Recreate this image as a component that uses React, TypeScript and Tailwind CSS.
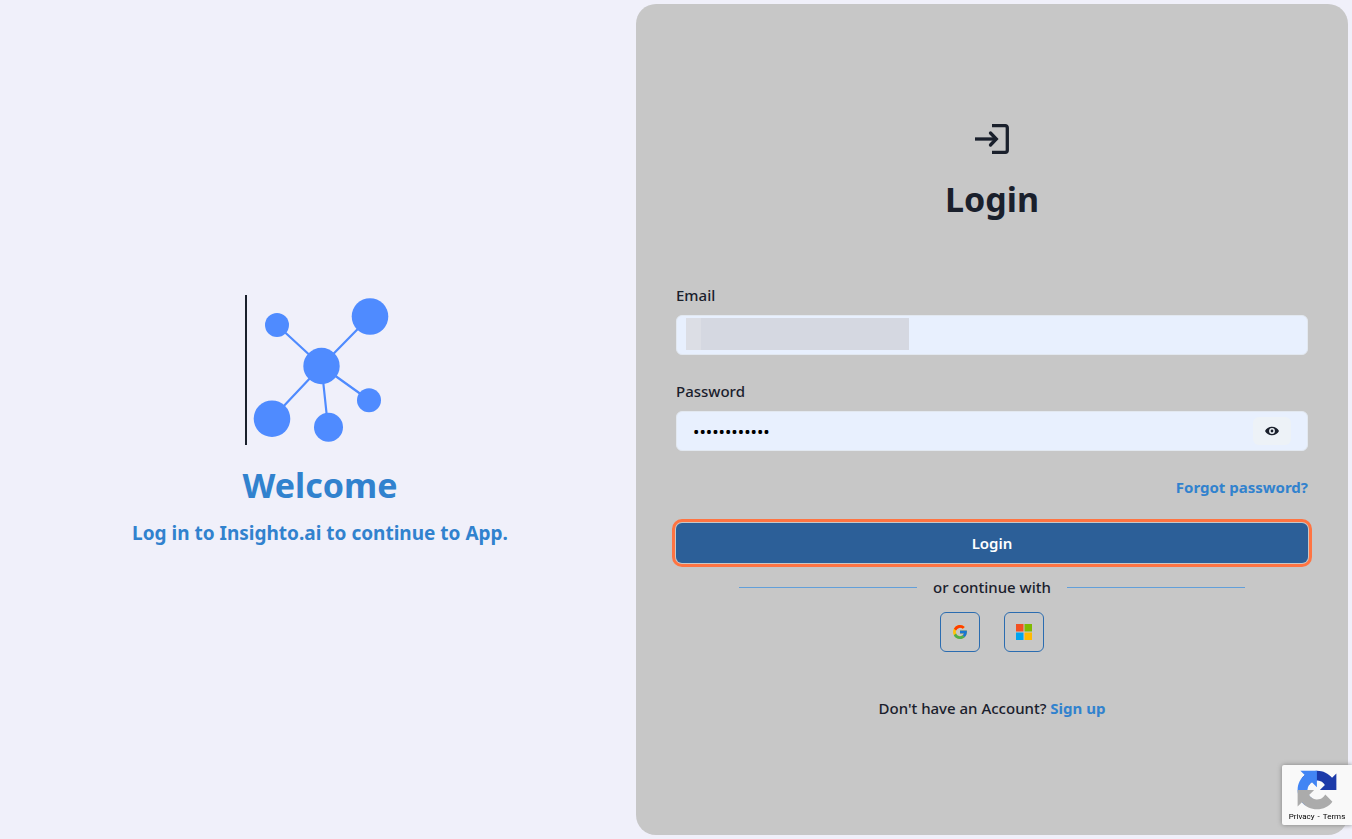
import { useState } from "react";

const ink = "text-[#1a202c]";

function NetworkLogo() {
  return (
    <svg className="h-[150px] w-[150px]" viewBox="0 0 150 150" aria-hidden="true">
      <path d="M1 0v150" stroke="#1a202c" strokeWidth="2" />
      <g stroke="#4f8bff" strokeWidth="2.2">
        <path d="M76.5 71 32 30M76.5 71 125 21.500M76.500 71 27 123.500M76.500 71 83 132M76.500 71 124 105" />
      </g>
      <g fill="#4f8bff">
        <circle cx="76.500" cy="71" r="18.200" />
        <circle cx="32" cy="30" r="12" />
        <circle cx="125" cy="21.500" r="18.300" />
        <circle cx="27" cy="123.700" r="18.300" />
        <circle cx="83.500" cy="132.200" r="14.500" />
        <circle cx="124" cy="105.200" r="12" />
      </g>
    </svg>
  );
}

function EnterIcon() {
  return (
    <svg className={`h-10 w-10 ${ink}`} viewBox="0 0 40 40" fill="none" stroke="currentColor" strokeWidth="3.300" aria-hidden="true">
      <path d="M20 6.650h13.300a2 2 0 0 1 2 2v22.700a2 2 0 0 1-2 2H20" />
      <path d="M3 20h21" />
      <path d="m18.500 14 5.800 6-5.800 6" strokeLinecap="round" />
    </svg>
  );
}

function EyeIcon() {
  return (
    <svg className={`h-4 w-4 ${ink}`} viewBox="0 0 16 16" aria-hidden="true">
      <path fill="currentColor" fillRule="evenodd" d="M8 3.700C4.800 3.700 2.200 5.400 1 8c1.200 2.600 3.800 4.300 7 4.300s5.800-1.700 7-4.300c-1.200-2.600-3.800-4.300-7-4.300Zm0 7.200a2.900 2.900 0 1 1 0-5.800 2.900 2.900 0 0 1 0 5.800Zm0-4.300a1.400 1.400 0 1 0 0 2.800 1.400 1.400 0 0 0 0-2.800Z" />
    </svg>
  );
}

function GoogleIcon() {
  return (
    <svg className="h-4 w-4" viewBox="1 1 46 46" aria-hidden="true">
      <path fill="#ffc107" d="M43.600 20H24v8h11.300A12 12 0 1 1 32 15l5.700-5.700A20 20 0 1 0 43.600 20Z" />
      <path fill="#ff3d00" d="m6.300 14.700 6.600 4.800A12 12 0 0 1 32 15l5.700-5.700A20 20 0 0 0 6.300 14.700Z" />
      <path fill="#4caf50" d="M24 44c5.200 0 9.900-2 13.400-5.200l-6.200-5.200A12 12 0 0 1 12.700 28l-6.500 5A20 20 0 0 0 24 44Z" />
      <path fill="#1976d2" d="M43.600 20H24v8h11.300a12 12 0 0 1-4.100 5.600l6.200 5.200C37 39.200 44 34 44 24c0-1.300-.1-2.700-.4-4Z" />
    </svg>
  );
}

function MicrosoftIcon() {
  return (
    <svg className="h-4 w-4" viewBox="0 0 16 16" aria-hidden="true">
      <path fill="#f25022" d="M0 0h7.500v7.500H0z" />
      <path fill="#7fba00" d="M8.500 0H16v7.500H8.500z" />
      <path fill="#00a4ef" d="M0 8.500h7.500V16H0z" />
      <path fill="#ffb900" d="M8.500 8.500H16V16H8.500z" />
    </svg>
  );
}

function RecaptchaIcon() {
  return (
    <svg className="h-10 w-10" viewBox="-1 -1 66 66" aria-hidden="true">
      <path fill="#1c3aa9" d="M64 31.955l-.033-1.370V4.687l-7.160 7.160C50.948 4.674 42.033.093 32.050.093c-10.400 0-19.622 4.960-25.458 12.640l11.736 11.860a15.550 15.550 0 0 1 4.754-5.334c2.050-1.600 4.952-2.906 8.968-2.906.485 0 .860.057 1.135.163 4.976.393 9.288 3.140 11.828 7.124l-8.307 8.307L64 31.953" />
      <path fill="#4285f4" d="M31.862.094l-1.370.033H4.594l7.160 7.160C4.580 13.147 0 22.060 0 32.046c0 10.400 4.960 19.622 12.640 25.458L24.500 45.768a15.550 15.550 0 0 1-5.334-4.754c-1.600-2.050-2.906-4.952-2.906-8.968 0-.485.057-.860.163-1.135.393-4.976 3.140-9.288 7.124-11.828l8.307 8.307L31.860.095" />
      <path fill="#ababab" d="M.001 32.045l.033 1.370v25.898l7.160-7.160c5.860 7.173 14.774 11.754 24.760 11.754 10.400 0 19.622-4.960 25.458-12.640l-11.736-11.860a15.550 15.550 0 0 1-4.754 5.334c-2.050 1.600-4.952 2.906-8.968 2.906-.485 0-.860-.057-1.135-.163-4.976-.393-9.288-3.140-11.828-7.124l8.307-8.307c-10.522.040-22.400.066-27.295-.005" />
    </svg>
  );
}

const field =
  "h-10 w-full rounded-md border border-[#e2e8f0] bg-[#e8f0fe] px-4 text-[17px] text-black outline-none";
const social =
  "flex h-10 w-10 items-center justify-center rounded-md border border-[#2b6cb0]";

export default function App() {
  const [visible, setVisible] = useState(false);
  const [email, setEmail] = useState("");
  const [password, setPassword] = useState("insight-2024");

  return (
    <div className={`flex min-h-screen bg-[#f0f0fa] p-1 font-['Noto_Sans',sans-serif] text-[15px] leading-6 ${ink}`}>
      <section className="flex flex-1 flex-col items-center justify-center text-center font-bold text-[#3182ce]">
        <NetworkLogo />
        <h1 className="mt-4 text-[34px] leading-12">Welcome</h1>
        <p className="mt-3 text-[19px] leading-6">Log in to Insighto.ai to continue to App.</p>
      </section>

      <main className="flex flex-1 flex-col items-center justify-center rounded-[20px] bg-[#c7c7c7] px-10">
        <EnterIcon />
        <h2 className="mt-4 text-[34px] leading-12 font-bold">Login</h2>

        <form className="mt-15 flex w-full flex-col" onSubmit={(e) => e.preventDefault()}>
          <label htmlFor="email" className="mb-2 self-start font-medium">Email</label>
          <div className="relative">
            <input id="email" type="email" className={field} value={email} onChange={(e) => setEmail(e.target.value)} />
            <div className="pointer-events-none absolute top-[3px] left-[10px] flex h-8 w-[223px] bg-[#d5d8e1]" aria-hidden="true">
              <span className="w-[15px] bg-[#dcdee5]" />
            </div>
          </div>

          <label htmlFor="password" className="mt-6 mb-2 self-start font-medium">Password</label>
          <div className="relative">
            <input id="password" type={visible ? "text" : "password"} className={field} value={password} onChange={(e) => setPassword(e.target.value)} />
            <button
              type="button"
              aria-label="Show password"
              onClick={() => setVisible(!visible)}
              className="absolute top-[6px] right-[17px] flex h-7 w-[38px] items-center justify-center rounded-md bg-[#edf2f7]"
            >
              <EyeIcon />
            </button>
          </div>

          <a href="#forgot" className="mt-6 self-end font-bold text-[#3182ce]">Forgot password?</a>

          <button
            type="submit"
            className="mt-6 h-10 rounded-md bg-[#2c5f98] font-semibold text-white outline-3 outline-offset-1 outline-[#ff7442]"
          >
            Login
          </button>
        </form>

        <div className="mt-3 flex w-4/5 items-center gap-4">
          <hr className="flex-1 border-[#629fd9]" />
          <span className="font-medium">or continue with</span>
          <hr className="flex-1 border-[#629fd9]" />
        </div>

        <div className="mt-[13px] flex gap-6">
          <button type="button" aria-label="Continue with Google" className={social}>
            <GoogleIcon />
          </button>
          <button type="button" aria-label="Continue with Microsoft" className={social}>
            <MicrosoftIcon />
          </button>
        </div>

        <p className="mt-11 font-medium">
          Don't have an Account?{" "}
          <a href="#signup" className="font-bold text-[#3182ce]">Sign up</a>
        </p>
      </main>

      <aside className="fixed right-0 bottom-[14px] flex h-[60px] w-[70px] flex-col items-center justify-between rounded-l-xs bg-[#f9f9f9] pt-[5px] pb-[2px] shadow-[0_0_5px_gray]">
        <RecaptchaIcon />
        <div className="flex gap-[3px] font-['Roboto',sans-serif] text-[8px] leading-3 text-black">
          <a href="#privacy">Privacy</a>
          <span>-</span>
          <a href="#terms">Terms</a>
        </div>
      </aside>
    </div>
  );
}
